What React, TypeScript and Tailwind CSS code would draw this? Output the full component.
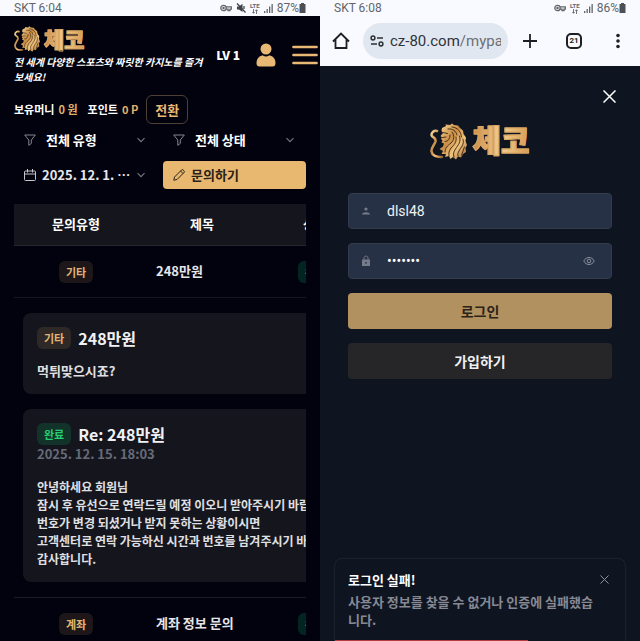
import React from "react";

const LionLogo: React.FC<{ id: string; className: string }> = ({ id, className }) => (
  <svg viewBox="0 0 37 37" className={className} aria-hidden="true">
    <defs>
      <linearGradient id={id} x1="0" y1="0" x2="1" y2="1">
        <stop offset="0" stopColor="#f6d79b" />
        <stop offset="0.4" stopColor="#c98d45" />
        <stop offset="0.65" stopColor="#f0c580" />
        <stop offset="1" stopColor="#9a622b" />
      </linearGradient>
    </defs>
    {/* tail */}
    <path
      d="M7 8C4 7 1.500 9.500 1.500 12C2 15 6.500 14 5.500 18.500C4.500 22 1 25 1.500 28.500C2 32 6 34.500 12 34"
      fill="none"
      stroke={`url(#${id})`}
      strokeWidth="2.500"
      strokeLinecap="round"
    />
    {/* mane */}
    <path
      d="M12 5L16 3L15.500 1.500L20 2L22 0.500L24 2L28 2.500L30 5L33 7.500L33.500 11L36 14.500L35.500 18L37 22L35.500 25L36 29L33 31L31 34.500L28 33.500L26 36.500L23 34L20.500 36L19 33L15 34L16 31L11.500 31L13 28L9.500 26L13 23.500L14 20.500L11.500 19.500L12.500 17.500L11 16L12 14.500L10.500 13L13 10L11.500 8Z"
      fill={`url(#${id})`}
    />
    {/* face and hair strands */}
    <path
      d="M13 9.500L17.500 10.500M12.500 14.500L16 14M15 18.500C18 18.500 20 16 20 12M18 6C23 5.500 26 8 27 12M22 4C28 4.500 31 9 31.500 14M22 9C25 13 24 17 21 20C17 23 15 25 15 29M26 14C27 19 24 22 21 25C19 28 18.500 30 19 33M29.500 13C31.500 19 28 22 25.500 26C23.500 29 23 31 24 34M33 16C34.500 22 31 24 29 28C28 30 27.500 31 28 33M34.500 24C34 27 32 29 31.500 32"
      fill="none"
      stroke="#3a230f"
      strokeWidth="0.900"
      strokeLinecap="round"
    />
  </svg>
);

const StatusBar: React.FC<{ time: string; battery: string; muted?: boolean }> = ({
  time,
  battery,
  muted,
}) => (
  <div className="flex h-4 items-center justify-between bg-[#f8faff] px-3.5 font-['Roboto',sans-serif] text-[12px] leading-4 text-[#62656a]">
    <span>SKT {time}</span>
    <span className="flex items-center gap-1">
      <svg viewBox="0 0 12 8" className="h-2 w-3" fill="none" stroke="currentColor" strokeWidth="1.300">
        <circle cx="3.500" cy="4" r="2.700" />
        <circle cx="3.500" cy="4" r="0.600" />
        <path d="M6 2.800H11.300V5.200H10V6.500H8V5.200H6" />
      </svg>
      {muted && (
        <svg viewBox="0 0 10 10" className="size-2.5" fill="#3f4246">
          <path d="M1 3.500H3L6.500 0.800V9L3 6.500H1Z" />
          <path d="M1 0.500L9.500 9.500M8 3V6" stroke="#3f4246" strokeWidth="1.300" />
        </svg>
      )}
      <span className="flex flex-col items-center text-[6px] leading-[6px] font-bold">
        LTE
        <svg viewBox="0 0 6 5" className="h-[5px] w-1.5" fill="none" stroke="currentColor" strokeWidth="0.900">
          <path d="M1.500 0V4M0.300 3L1.500 4.300L2.700 3M4.500 5V1M3.300 2L4.500 0.700L5.700 2" />
        </svg>
      </span>
      <svg viewBox="0 0 9 9" className="size-[9px]" fill="currentColor">
        <path d="M0 7H1.300V9H0ZM2.500 5H3.800V9H2.500ZM5 2.500H6.300V9H5ZM7.500 0H8.800V9H7.500Z" />
      </svg>
      <span className="flex items-center">
        {battery}
        <svg viewBox="0 0 7 10" className="h-2.5 w-[7px]" fill="#4c4f53">
          <path d="M2 0H5V1H6.500V10H0.500V1H2Z" />
        </svg>
      </span>
    </span>
  </div>
);

const FunnelIcon = () => (
  <svg viewBox="0 0 12 12" className="size-3 shrink-0" fill="none" stroke="#85868d" strokeLinejoin="round">
    <path d="M0.700 1H11.300L7.300 6V9.500L4.800 11.300V6Z" />
  </svg>
);

const ChevronIcon = () => (
  <svg viewBox="0 0 8 8" className="size-2 shrink-0" fill="none" stroke="#777880" strokeWidth="1.100">
    <path d="M0.500 2.200L4 5.700L7.500 2.200" />
  </svg>
);

const Filter: React.FC<{ label: string }> = ({ label }) => (
  <div className="flex h-7 items-center pr-3 pl-2.5">
    <FunnelIcon />
    <select
      aria-label={label}
      className="ml-2.5 min-w-0 flex-1 appearance-none bg-transparent text-[13px] font-bold text-white"
    >
      <option>{label}</option>
    </select>
    <ChevronIcon />
  </div>
);

const Badge: React.FC<{ tone: "gold" | "green" | "teal"; children: React.ReactNode }> = ({
  tone,
  children,
}) => {
  const tones = {
    gold: "bg-[#e8b974]/12 text-[#e3b473]",
    green: "bg-[#11332a] text-[#28cf70]",
    teal: "bg-[#032522] text-[#28cf70]",
  };
  return (
    <span
      className={`inline-block h-[22px] rounded-md px-[7px] align-middle text-[11px] leading-[22px] font-bold ${tones[tone]}`}
    >
      {children}
    </span>
  );
};

const InquiryRow: React.FC<{ type: string; title: string }> = ({ type, title }) => (
  <tr className="h-[52px] border-b border-[#15161e] leading-[22px]">
    <td className="text-center">
      <Badge tone="gold">{type}</Badge>
    </td>
    <td className="pl-[18px] text-left text-[13px] font-bold text-[#e6e6ea]">{title}</td>
    <td className="text-center">
      <Badge tone="teal">완료</Badge>
    </td>
  </tr>
);

const InquiryScreen: React.FC = () => (
  <section className="flex h-screen min-w-0 flex-col overflow-hidden bg-[#02020e] text-white">
    <StatusBar time="6:04" battery="87%" muted />

    {/* HEADER */}
    <header className="flex items-center pt-2.5 pr-0.5 pl-3.5">
      <div className="min-w-0 flex-1">
        <div className="flex h-7 items-start gap-1">
          <LionLogo id="lion-small" className="size-[26px]" />
          <span className="bg-linear-to-r from-[#c98a45] via-[#f3cf90] to-[#d59a52] bg-clip-text text-[22px] leading-6 font-black text-transparent [-webkit-text-stroke:1px_#dca763]">
            체코
          </span>
        </div>
        <p className="text-[10px] leading-[15px] font-bold italic">
          전 세계 다양한 스포츠와 짜릿한 카지노를 즐겨보세요!
        </p>
      </div>
      <span className="ml-2 text-[12px] font-black">LV 1</span>
      <button aria-label="내 정보" className="ml-4">
        <svg viewBox="0 0 20 24" className="h-6 w-5" fill="#e8b974">
          <circle cx="10" cy="6" r="5.500" />
          <path d="M0.500 20C0.500 15 4 12.500 7 12.500C9 13.700 11 13.700 13 12.500C16 12.500 19.500 15 19.500 20C19.500 22.500 18.500 23.500 16.500 23.500H3.500C1.500 23.500 0.500 22.500 0.500 20Z" />
        </svg>
      </button>
      <button aria-label="메뉴" className="ml-4">
        <svg viewBox="0 0 26 22" className="h-[22px] w-[26px]" stroke="#e8b974" strokeWidth="2.700" strokeLinecap="round">
          <path d="M1.500 3H24.500M1.500 11H24.500M1.500 19H24.500" />
        </svg>
      </button>
    </header>

    <div className="flex flex-col px-3.5">
      {/* BALANCE */}
      <div className="mt-[11px] flex items-center text-[11px] font-bold">
        <span>보유머니</span>
        <span className="ml-1 text-[#e0b06c]">0 원</span>
        <span className="ml-2.5">포인트</span>
        <span className="ml-1 text-[#e0b06c]">0 P</span>
        <button className="ml-2 h-[29px] rounded-md border border-[#4f4034] px-2 text-[13px] text-[#e8b974]">
          전환
        </button>
      </div>

      {/* FILTERS */}
      <div className="mt-0.5 grid grid-cols-2 gap-x-1.5 gap-y-[7px]">
        <Filter label="전체 유형" />
        <Filter label="전체 상태" />
        <button className="flex h-7 items-center pr-3 pl-2.5 text-left text-[13px] font-bold text-[#e6e6ea]">
          <svg viewBox="0 0 12 12" className="size-3 shrink-0" fill="none" stroke="#c5c5ca">
            <path d="M1.500 2H10.500Q11.500 2 11.500 3V10.500Q11.500 11.500 10.500 11.500H1.500Q0.500 11.500 0.500 10.500V3Q0.500 2 1.500 2ZM0.500 5H11.500M3.500 0V3.500M8.500 0V3.500" />
          </svg>
          <span className="ml-1.5 flex-1 whitespace-nowrap">2025. 12. 1. ⋯</span>
          <ChevronIcon />
        </button>
        <button className="flex h-7 items-center gap-1.5 rounded-sm bg-[#e8b870] px-2.5 text-[13px] font-bold text-[#2a2118]">
          <svg viewBox="0 0 12 12" className="size-3" fill="none" stroke="currentColor" strokeLinejoin="round">
            <path d="M0.800 11.200L1.500 8L8.500 1Q9.300 0.300 10.200 1L11 1.800Q11.700 2.700 11 3.500L4 10.500ZM7.500 2L10 4.500" />
          </svg>
          문의하기
        </button>
      </div>

      {/* INQUIRIES */}
      <div className="mt-[15px] overflow-hidden">
        <table className="w-[350px] table-fixed border-collapse">
          <colgroup>
            <col className="w-[124px]" />
            <col className="w-[128px]" />
            <col />
          </colgroup>
          <thead>
            <tr className="h-[41px] border-b border-[#25262c] bg-[#15161d] text-[13px] leading-[18px] font-bold">
              <th>문의유형</th>
              <th>제목</th>
              <th>상태</th>
            </tr>
          </thead>
          <tbody>
            <InquiryRow type="기타" title="248만원" />
            <tr className="border-b border-[#1b1c23]">
              <td colSpan={3} className="py-[15px] pl-[9px]">
                <article className="rounded-lg bg-[#15161d] p-3.5">
                  <div className="flex items-center gap-[7px]">
                    <Badge tone="gold">기타</Badge>
                    <h3 className="text-[16px] leading-[22px] font-bold text-[#f1f1f4]">248만원</h3>
                  </div>
                  <p className="mt-[13px] text-[13px] leading-[18px] font-bold text-[#e0e0e4]">
                    먹튀맞으시죠?
                  </p>
                </article>
                <article className="mt-[15px] rounded-lg bg-[#15161d] p-3.5">
                  <div className="flex items-center gap-[7px]">
                    <Badge tone="green">완료</Badge>
                    <h3 className="text-[16px] leading-[22px] font-bold text-[#f1f1f4]">Re: 248만원</h3>
                  </div>
                  <time className="block text-[13px] leading-[18px] font-bold text-[#666b79]">
                    2025. 12. 15. 18:03
                  </time>
                  <p className="mt-[15px] text-[12px] leading-[18px] font-bold whitespace-nowrap text-[#e0e0e4]">
                    안녕하세요 회원님
                    <br />
                    잠시 후 유선으로 연락드릴 예정 이오니 받아주시기 바랍니다.
                    <br />
                    번호가 변경 되셨거나 받지 못하는 상황이시면
                    <br />
                    고객센터로 연락 가능하신 시간과 번호를 남겨주시기 바랍니다.
                    <br />
                    감사합니다.
                  </p>
                </article>
              </td>
            </tr>
            <InquiryRow type="계좌" title="계좌 정보 문의" />
          </tbody>
        </table>
      </div>
    </div>
  </section>
);

const BrowserBar: React.FC = () => (
  <div className="flex h-[50px] items-center bg-[#f8faff] pl-3 text-[#1d1f22]">
    <button aria-label="홈">
      <svg viewBox="0 0 18 18" className="size-[18px]" fill="none" stroke="currentColor" strokeWidth="1.800">
        <path d="M1 9.500L9 1.500L17 9.500M3.500 7.500V16H14.500V7.500" />
      </svg>
    </button>
    <div className="ml-[13px] flex h-9 min-w-0 flex-1 items-center gap-1.5 rounded-full bg-[#e1e7f0] px-[7px]">
      <svg viewBox="0 0 14 12" className="h-3 w-3.5 shrink-0" fill="none" stroke="#2d3034" strokeWidth="1.500">
        <circle cx="3" cy="3" r="1.900" />
        <path d="M7 3H13M1 9H7" />
        <circle cx="11" cy="9" r="1.900" />
      </svg>
      <span className="min-w-0 flex-1 overflow-hidden font-['Roboto',sans-serif] text-[15px] whitespace-nowrap text-[#303338]">
        cz-80.com<span className="text-[#6b6f75]">/mypa</span>
      </span>
    </div>
    <button aria-label="새 탭" className="flex w-11 justify-center">
      <svg viewBox="0 0 14 14" className="size-3.5" stroke="currentColor" strokeWidth="1.800">
        <path d="M7 0V14M0 7H14" />
      </svg>
    </button>
    <button aria-label="탭 목록" className="flex w-11 justify-center">
      <span className="flex size-4 items-center justify-center rounded-[5px] border-2 border-current font-['Roboto',sans-serif] text-[8px] leading-none font-bold">
        21
      </span>
    </button>
    <button aria-label="더보기" className="flex w-11 justify-center">
      <svg viewBox="0 0 4 16" className="h-4 w-1" fill="currentColor">
        <circle cx="2" cy="2.500" r="1.800" />
        <circle cx="2" cy="8" r="1.800" />
        <circle cx="2" cy="13.500" r="1.800" />
      </svg>
    </button>
  </div>
);

const LoginScreen: React.FC = () => (
  <section className="relative flex h-screen min-w-0 flex-col overflow-hidden bg-[#0f1520] text-white">
    <StatusBar time="6:08" battery="86%" />
    <BrowserBar />

    <button aria-label="닫기" className="mt-6 mr-6 self-end">
      <svg viewBox="0 0 13 13" className="size-[13px]" stroke="#fff" strokeWidth="1.500">
        <path d="M0.500 0.500L12.500 12.500M12.500 0.500L0.500 12.500" />
      </svg>
    </button>

    <div className="mt-[18px] flex h-10 items-center justify-center gap-[5px]">
      <LionLogo id="lion-large" className="size-[37px]" />
      <span className="bg-linear-to-r from-[#c98a45] via-[#f3cf90] to-[#d59a52] bg-clip-text pb-1 text-[31px] leading-9 font-black text-transparent [-webkit-text-stroke:1px_#dca763]">
        체코
      </span>
    </div>

    {/* LOGIN FORM */}
    <form className="mt-8 flex flex-col gap-3.5 px-7 font-bold" onSubmit={(e) => e.preventDefault()}>
      <label className="flex h-9 items-center rounded-sm border border-[#343b4b] bg-[#263146] px-3">
        <svg viewBox="0 0 10 10" className="size-2.5 shrink-0" fill="#757b88">
          <circle cx="5" cy="3" r="1.600" />
          <path d="M1 8.500C1 5.500 9 5.500 9 8.500Z" />
        </svg>
        <input
          aria-label="아이디"
          defaultValue="dlsl48"
          className="ml-4 min-w-0 flex-1 bg-transparent font-['Roboto',sans-serif] text-[14px] font-normal text-[#f0f1f4] outline-none"
        />
      </label>
      <div className="flex h-9 items-center rounded-sm border border-[#343b4b] bg-[#263146] px-3">
        <svg viewBox="0 0 10 12" className="h-3 w-2.5 shrink-0" fill="#757b88">
          <path d="M1 4.500H9V11H1Z" />
          <path d="M3 5V3C3 0.500 7 0.500 7 3V5" fill="none" stroke="#757b88" />
          <circle cx="5" cy="7.800" r="0.900" fill="#263146" />
        </svg>
        <input
          type="password"
          aria-label="비밀번호"
          defaultValue="1234567"
          className="ml-4 min-w-0 flex-1 bg-transparent font-['Roboto',sans-serif] text-[14px] font-normal text-white outline-none"
        />
        <button type="button" aria-label="비밀번호 표시" className="mr-1">
          <svg viewBox="0 0 12 10" className="h-2.5 w-3" fill="none" stroke="#8b909b">
            <path d="M0.800 5C3 0.300 9 0.300 11.200 5C9 9.700 3 9.700 0.800 5Z" />
            <circle cx="6" cy="5" r="1.800" />
          </svg>
        </button>
      </div>
      <button className="h-9 rounded-sm bg-[#b29160] text-[14px] text-[#2c2318]">로그인</button>
      <button type="button" className="h-9 rounded-sm bg-[#262628] text-[14px] text-[#f0f0f2]">
        가입하기
      </button>
    </form>

    {/* TOAST */}
    <div
      role="alert"
      className="absolute inset-x-3.5 bottom-0 rounded-t-lg border border-b-0 border-[#1e2129] bg-[#0f1520] text-[13px] leading-[18px]"
    >
      <div className="flex items-start justify-between pt-3 pr-4 pb-[11px] pl-[13px]">
        <div className="min-w-0 flex-1">
          <p className="font-bold">로그인 실패!</p>
          <p className="mt-1 font-bold text-[#868994]">
            사용자 정보를 찾을 수 없거나 인증에 실패했습니다.
          </p>
        </div>
        <button aria-label="알림 닫기" className="mt-1">
          <svg viewBox="0 0 9 9" className="size-[9px]" stroke="#8f929c">
            <path d="M0.500 0.500L8.500 8.500M8.500 0.500L0.500 8.500" />
          </svg>
        </button>
      </div>
      <div className="h-px w-2/3 bg-[#b43d42]" />
    </div>
  </section>
);

const App: React.FC = () => {
  return (
    <main className="grid h-screen grid-cols-2 overflow-hidden font-['Noto_Sans_CJK_KR',sans-serif]">
      <InquiryScreen />
      <LoginScreen />
    </main>
  );
};

export default App;
